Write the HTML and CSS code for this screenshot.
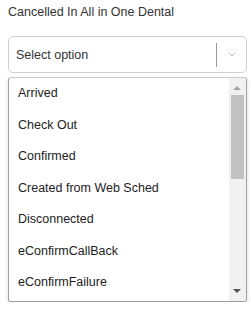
FILE: index.html
```html
<!DOCTYPE html>
<html lang="en">
<head>
    <meta charset="UTF-8">
    <meta name="viewport" content="width=device-width, initial-scale=1.0">
    <title>Status Select</title>
    <link rel="stylesheet" href="styles.css">
</head>
<body>
    <div class="field">
        <div class="field-label">Cancelled In All in One Dental</div>
        <div class="select">
            <div class="select-value">Select option</div>
            <div class="select-indicators">
                <span class="separator"></span>
                <svg class="chevron" width="8" height="5" viewBox="0 0 8 5">
                    <path d="M1 1 L4 4 L7 1" fill="none" stroke="#b5b5b5" stroke-width="1"/>
                </svg>
            </div>
        </div>

        <!-- Open dropdown list -->
        <div class="menu">
            <div class="menu-items">
                <div class="menu-item">Arrived</div>
                <div class="menu-item">Check Out</div>
                <div class="menu-item">Confirmed</div>
                <div class="menu-item">Created from Web Sched</div>
                <div class="menu-item">Disconnected</div>
                <div class="menu-item">eConfirmCallBack</div>
                <div class="menu-item">eConfirmFailure</div>
            </div>
            <div class="scroll-track">
                <span class="arrow arrow-up"></span>
                <div class="scroll-thumb"></div>
                <span class="arrow arrow-down"></span>
            </div>
        </div>
    </div>
</body>
</html>
```
FILE: styles.css
```css
html, body {
    margin: 0;
    background: #fff;
    font-family: "Liberation Sans", Arial, sans-serif;
    color: #333;
}
.field {
    padding: 4px 4px 0 8px;
}
.field-label {
    font-size: 12.5px;
    line-height: 16px;
    margin-bottom: 16px;
}
.select {
    display: flex;
    align-items: center;
    height: 35px;
    border: 1px solid #d0d0d0;
    border-radius: 5px;
    padding-left: 7px;
}
.select-value {
    flex: 1;
    font-size: 12.5px;
    color: #333;
}
.select-indicators {
    display: flex;
    align-items: center;
    height: 100%;
}
.separator {
    width: 1px;
    height: 24px;
    background: #999;
}
.chevron {
    margin: 0 10px 0 11px;
}
.menu {
    margin-top: 4px;
    width: 237px;
    height: 223px;
    display: flex;
    background: #fff;
    border: 1px solid #a0a0a0;
    border-top-color: #c8c8c8;
    border-radius: 3px;
    box-shadow: 0 2px 4px rgba(0, 0, 0, 0.15);
    overflow: hidden;
}
.menu-items {
    flex: 1;
}
.menu-item {
    height: 31.5px;
    line-height: 31.5px;
    padding-left: 9px;
    font-size: 12.5px;
    color: #222;
    white-space: nowrap;
}
.scroll-track {
    position: relative;
    width: 17px;
    background: #f1f1f1;
}
.scroll-thumb {
    position: absolute;
    top: 17px;
    left: 2px;
    width: 13px;
    height: 84px;
    background: #c1c1c1;
}
.arrow {
    position: absolute;
    left: 4px;
    width: 0;
    height: 0;
    border-left: 4.5px solid transparent;
    border-right: 4.5px solid transparent;
}
.arrow-up {
    top: 8px;
    border-bottom: 4px solid #a3a3a3;
}
.arrow-down {
    bottom: 8px;
    border-top: 4px solid #505050;
}
```
